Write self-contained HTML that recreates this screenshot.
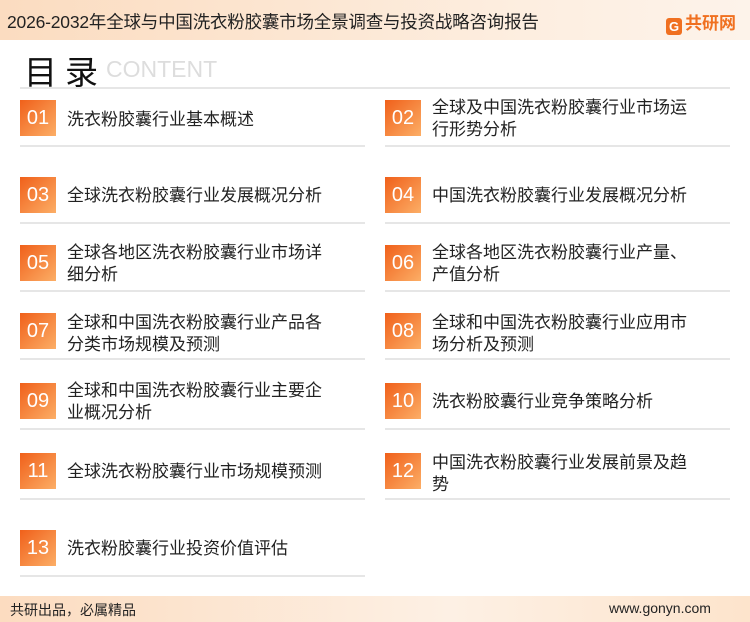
<!DOCTYPE html>
<html><head><meta charset="utf-8"><style>
body{margin:0;width:750px;height:622px;position:relative;background:#fff;font-family:"Liberation Sans","Noto Sans CJK SC",sans-serif;overflow:hidden;color:#222}
.hd{position:absolute;left:0;top:0;width:750px;height:40px;background:linear-gradient(90deg,#fbdcc0,#fdeee0 70%,#fdf3ea)}
.hd .t{position:absolute;left:7px;top:9px;font-size:17.5px;color:#222;letter-spacing:-0.2px}
.logo{position:absolute;left:666px;top:9px;font-size:17px;font-weight:bold;color:#f07020}
.logo i{display:inline-block;width:16px;height:17px;background:#f07020;border-radius:3px;vertical-align:-2px;margin-right:3px;font-style:normal;color:#fff;font-size:13px;text-align:center;line-height:17px}
.ml{position:absolute;left:24px;top:46px;font-size:33px;color:#111;letter-spacing:8px}
.ct{position:absolute;left:106px;top:56px;font-size:23px;color:#ddd}
.ln{position:absolute;height:2px;background:#e6e6e6}
.b{position:absolute;width:36px;height:36px;background:linear-gradient(135deg,#f0601a,#fcae66);color:#fff;font-size:20px;text-align:center;line-height:36px}
.x{position:absolute;font-size:17px;line-height:22px;color:#222}
.ft{position:absolute;left:0;top:596px;width:750px;height:26px;background:linear-gradient(90deg,#fcdcc0,#fdf0e4 60%,#fde4cc)}
.ft span{position:absolute;top:4px;font-size:14px;color:#222}
</style></head><body>
<div class="hd"><div class="t">2026-2032年全球与中国洗衣粉胶囊市场全景调查与投资战略咨询报告</div><div class="logo"><i>G</i>共研网</div></div>
<div class="ml">目录</div><div class="ct">CONTENT</div>
<div class="ln" style="left:20px;top:87px;width:710px"></div>

<div class="b" style="left:20px;top:100px">01</div><div class="x" style="left:67px;top:109px">洗衣粉胶囊行业基本概述</div>
<div class="b" style="left:385px;top:100px">02</div><div class="x" style="left:432px;top:97px">全球及中国洗衣粉胶囊行业市场运<br>行形势分析</div>
<div class="ln" style="left:20px;top:145px;width:345px"></div><div class="ln" style="left:385px;top:145px;width:345px"></div>

<div class="b" style="left:20px;top:177px">03</div><div class="x" style="left:67px;top:185px">全球洗衣粉胶囊行业发展概况分析</div>
<div class="b" style="left:385px;top:177px">04</div><div class="x" style="left:432px;top:185px">中国洗衣粉胶囊行业发展概况分析</div>
<div class="ln" style="left:20px;top:222px;width:345px"></div><div class="ln" style="left:385px;top:222px;width:345px"></div>

<div class="b" style="left:20px;top:245px">05</div><div class="x" style="left:67px;top:242px">全球各地区洗衣粉胶囊行业市场详<br>细分析</div>
<div class="b" style="left:385px;top:245px">06</div><div class="x" style="left:432px;top:242px">全球各地区洗衣粉胶囊行业产量、<br>产值分析</div>
<div class="ln" style="left:20px;top:290px;width:345px"></div><div class="ln" style="left:385px;top:290px;width:345px"></div>

<div class="b" style="left:20px;top:313px">07</div><div class="x" style="left:67px;top:312px">全球和中国洗衣粉胶囊行业产品各<br>分类市场规模及预测</div>
<div class="b" style="left:385px;top:313px">08</div><div class="x" style="left:432px;top:312px">全球和中国洗衣粉胶囊行业应用市<br>场分析及预测</div>
<div class="ln" style="left:20px;top:358px;width:345px"></div><div class="ln" style="left:385px;top:358px;width:345px"></div>

<div class="b" style="left:20px;top:383px">09</div><div class="x" style="left:67px;top:380px">全球和中国洗衣粉胶囊行业主要企<br>业概况分析</div>
<div class="b" style="left:385px;top:383px">10</div><div class="x" style="left:432px;top:391px">洗衣粉胶囊行业竞争策略分析</div>
<div class="ln" style="left:20px;top:428px;width:345px"></div><div class="ln" style="left:385px;top:428px;width:345px"></div>

<div class="b" style="left:20px;top:453px">11</div><div class="x" style="left:67px;top:461px">全球洗衣粉胶囊行业市场规模预测</div>
<div class="b" style="left:385px;top:453px">12</div><div class="x" style="left:432px;top:452px">中国洗衣粉胶囊行业发展前景及趋<br>势</div>
<div class="ln" style="left:20px;top:498px;width:345px"></div><div class="ln" style="left:385px;top:498px;width:345px"></div>

<div class="b" style="left:20px;top:530px">13</div><div class="x" style="left:67px;top:538px">洗衣粉胶囊行业投资价值评估</div>
<div class="ln" style="left:20px;top:575px;width:345px"></div>

<div class="ft"><span style="left:10px">共研出品，必属精品</span><span style="left:609px">www.gonyn.com</span></div>
</body></html>
